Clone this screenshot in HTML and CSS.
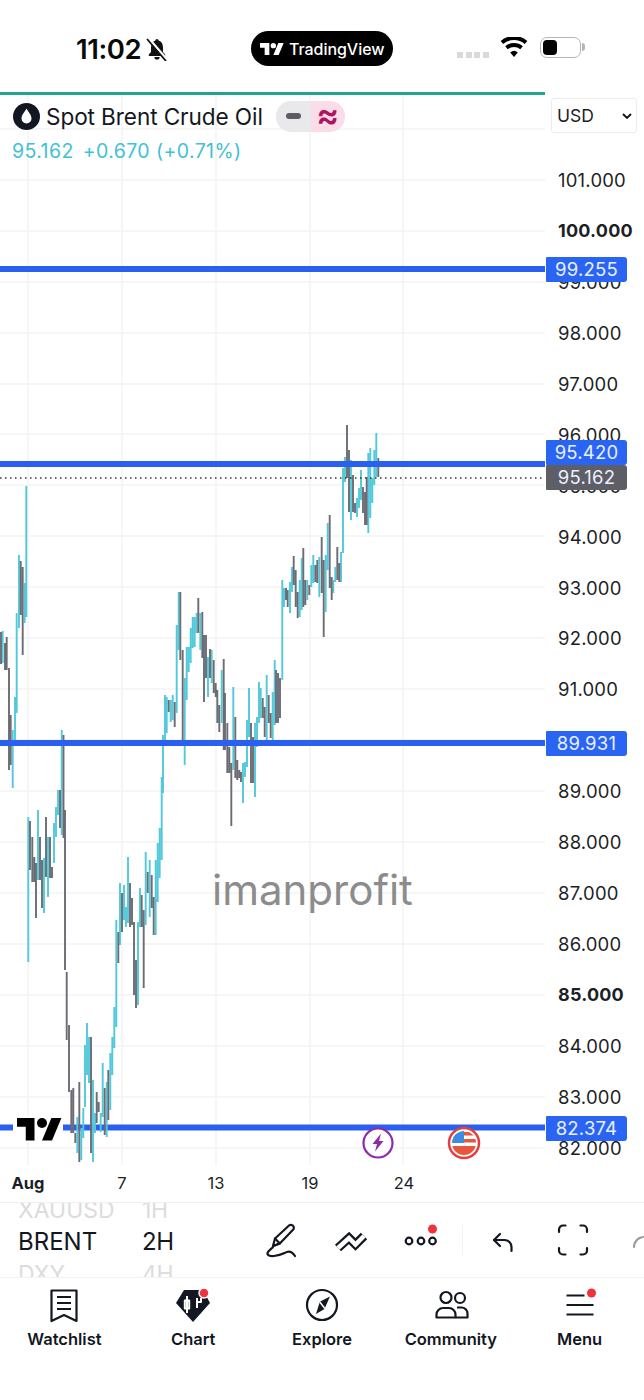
FILE: index.html
```html
<!DOCTYPE html>
<html lang="en">
<head>
<meta charset="utf-8">
<title>Spot Brent Crude Oil</title>
<link rel="stylesheet" href="styles.css">
</head>
<body>
<div class="page">
  <header class="status">
    <div class="status-left">
      <span class="clock">11:02</span>
      <svg class="bell" viewBox="0 0 24 24"><path d="M12 2a1.6 1.6 0 0 0-1.6 1.6C7.4 4.5 6 7.2 6 10.5V15l-2.2 2.6V19h16.4v-1.4L18 15v-4.500c0-3.300-1.400-6-4.400-6.900A1.600 1.600 0 0 0 12 2zM9.400 20a2.600 2.600 0 0 0 5.200 0z"/><path class="bell-cut" d="M3 1l19 22"/><path class="bell-slash" d="M2 2l19 22"/></svg>
    </div>
    <div class="pill">
      <svg class="pill-logo" viewBox="0 3 36 20"><path d="M14 22H7V11H0V4h14v18zM28 22h-8l7.500-18h8L28 22z"/><circle cx="20" cy="8" r="4"/></svg>
      <span>TradingView</span>
    </div>
    <div class="status-right">
      <div class="signal"><i></i><i></i><i></i><i></i></div>
      <svg class="wifi" viewBox="0 0 28 20"><path d="M14 20l-3.800-4.600a6 6 0 0 1 7.600 0z"/><path d="M7.700 12.300l-2.500-3a13.500 13.500 0 0 1 17.600 0l-2.500 3a9.700 9.700 0 0 0-12.600 0z"/><path d="M3.200 6.900L.7 3.900a20.500 20.500 0 0 1 26.600 0l-2.500 3a16.700 16.700 0 0 0-21.600 0z"/></svg>
      <div class="battery"><div class="battery-fill"></div></div>
      <div class="battery-cap"></div>
    </div>
  </header>

  <main class="chart">
    <div class="plot">
      <svg class="plot-svg" viewBox="0 92 545 1073">
        <path class="grid" d="M0 129H545M0 180H545M0 231H545M0 282H545M0 333H545M0 384H545M0 434H545M0 485H545M0 536H545M0 587H545M0 638H545M0 689H545M0 740H545M0 791H545M0 842H545M0 893H545M0 944H545M0 995H545M0 1046H545M0 1097H545M0 1148H545"/>
        <path class="grid" d="M28 95V1165M122 95V1165M216 95V1165M310 95V1165M403 95V1165"/>
        <path class="level" d="M0 1127.500H545"/>
        <path class="bars-teal" d="M2.700 631V663M12.700 730V788M15 697V743M16.700 613V713M19 555V628M24.700 583V623M26.300 486V617M28.300 817V962M38 810V880M44 858V913M48 837V897M54 823V863M56 807V837M58 790V815M61.700 730V835M77.300 1117V1153M81.300 1128V1160M83.300 1108V1138M85 1045V1107M87 1023V1075M89 1037V1083M93 1080V1162M95 1113V1133M100.700 1113V1132M102.700 1063V1117M106.700 1082V1137M110.300 1053V1110M112.300 1037V1075M114.300 1007V1048M116.300 920V1027M120 883V945M124 885V920M126 907V927M128 857V923M138 922V1005M140 888V927M145.700 852V925M149.700 860V917M155.700 860V935M157.700 843V902M159.700 828V878M161.700 777V860M163 735V793M165 695V743M166.700 697V733M170.700 700V722M172.700 695V720M176.700 625V713M178.700 592V650M184.700 678V765M186.700 647V700M188.700 647V672M190.700 628V663M192.700 617V648M194.700 617V647M196.700 613V633M200.300 613V650M208 657V697M211.700 650V683M221.700 670V723M233.300 687V770M243 763V803M245 762V777M247 720V767M249 688V737M255 723V797M257 717V747M259 682V723M260.700 688V718M266.700 675V745M272.700 692V740M274.700 660V725M282.300 580V680M284 588V607M290 582V613M292 567V592M299.700 580V617M301.700 558V610M307.300 580V600M311.300 565V587M313.300 555V583M319.300 557V597M325.700 555V612M327.700 523V570M333.300 580V593M335.300 567V582M341 552V582M343 468V553M345 457V482M351 460V520M357 498V517M359 488V508M361 470V500M368.300 453V533M370.300 448V518M372.300 478V503M374.300 450V485M376.300 433V477"/>
        <path class="bars-grey" d="M1 632V664M5 643V670M6.700 637V670M9 668V770M10.700 715V765M20.700 561V615M22.700 567V655M30 821V870M32.300 837V882M34.300 857V882M36 863V918M40 837V880M42 860V908M46 817V877M50 837V878M52 867V878M60 790V828M63.500 735V838M65 810V970M66.700 972V1040M69 1025V1092M71.300 1090V1133M73.300 1088V1133M75.300 1133V1143M79.300 1082V1162M91 1037V1153M96.700 1092V1123M98.700 1102V1112M104.700 1088V1135M108.300 1070V1120M118.300 932V963M122 893V932M130 883V927M132 898V925M134 922V995M136 960V1008M141.700 895V927M143.700 910V988M147.700 872V893M151.700 875V908M153.700 897V935M168.700 700V712M174.700 702V727M180.300 592V660M182.700 650V740M198.300 598V633M202.300 612V658M204 635V702M206 635V678M210 649V678M213.700 660V693M215.700 683V697M217.300 690V723M219.300 705V732M223.700 659V750M225 693V750M227.300 723V773M229.300 747V773M231.300 763V826M235.300 717V778M237.300 760V780M239.300 770V778M241 772V782M251 723V783M253 737V783M262.700 698V718M264.700 707V737M268.700 695V723M270.700 713V738M276 670V723M278 673V723M280 678V718M286 588V600M287.700 590V607M293.700 556V585M295.700 570V607M297.700 592V618M303.300 548V607M305.300 580V605M309.300 585V595M315.300 565V582M317.300 560V583M321.700 537V593M323.700 560V637M329.700 515V588M331.700 577V600M337.300 547V580M339.300 563V582M347 425V478M349 450V512M353 475V512M355 503V513M363 487V513M365 492V525M366.700 477V525M378.300 458V477"/>
        <path class="level" d="M0 269H545M0 464H545M0 743H545"/>
        <path class="last" d="M0 478H545"/>
        <rect class="logo-back" x="13" y="1116" width="50" height="26"/>
        <g transform="translate(17 1113) scale(1.25)"><path d="M14 22H7V11H0V4h14v18zM28 22h-8l7.500-18h8L28 22z"/><circle cx="20" cy="8" r="4"/></g>
        <circle class="bolt-ring" cx="378" cy="1143" r="14.500"/>
        <path class="bolt" d="M381 1133.500l-8.500 10.500h4.500l-2 7.500 8.500-10.500h-4.500z"/>
        <clipPath id="flag"><circle cx="464" cy="1143" r="12"/></clipPath>
        <circle class="flag-ring" cx="464" cy="1143" r="15"/>
        <g clip-path="url(#flag)">
          <path class="flag-red" d="M464 1132h12v3.500h-12zM464 1139h12v3.500h-12zM452 1146h24v9h-24z"/>
          <rect class="flag-blue" x="452" y="1131" width="12" height="12"/>
        </g>
      </svg>
      <div class="legend">
        <div class="legend-row">
          <svg class="drop" viewBox="0 0 27 27"><circle cx="13.500" cy="13.500" r="13.500"/><path class="drop-in" d="M13.500 5.500c-1 2.500-5 6-5 10a5 5 0 0 0 10 0c0-4-4-7.500-5-10z"/></svg>
          <span class="legend-title">Spot Brent Crude Oil</span>
          <div class="badges">
            <div class="badge-grey"><i></i></div>
            <div class="badge-pink">≈</div>
          </div>
        </div>
        <div class="legend-values"><span>95.162</span><span>+0.670 (+0.71%)</span></div>
      </div>
      <div class="watermark">imanprofit</div>
    </div>
    <aside class="axis">
      <span class="price">101.000</span>
      <span class="price strong">100.000</span>
      <span class="price">99.000</span>
      <span class="price">98.000</span>
      <span class="price">97.000</span>
      <span class="price">96.000</span>
      <span class="price">95.000</span>
      <span class="price">94.000</span>
      <span class="price">93.000</span>
      <span class="price">92.000</span>
      <span class="price">91.000</span>
      <span class="price">90.000</span>
      <span class="price">89.000</span>
      <span class="price">88.000</span>
      <span class="price">87.000</span>
      <span class="price">86.000</span>
      <span class="price strong">85.000</span>
      <span class="price">84.000</span>
      <span class="price">83.000</span>
      <span class="price">82.000</span>
      <div class="currency"><span>USD</span><svg class="caret" viewBox="0 0 10 6"><path d="M1 1l4 4 4-4"/></svg></div>
      <div class="tag tag-99">99.255</div>
      <div class="tag tag-95">95.420</div>
      <div class="tag tag-last">95.162</div>
      <div class="tag tag-89">89.931</div>
      <div class="tag tag-82">82.374</div>
    </aside>
  </main>

  <div class="timeline">
    <span class="time time-first">Aug</span>
    <span class="time">7</span>
    <span class="time">13</span>
    <span class="time">19</span>
    <span class="time">24</span>
  </div>

  <section class="toolbar">
    <div class="picker">
      <div class="wheel wheel-symbol">
        <span class="faded">XAUUSD</span>
        <span>BRENT</span>
        <span class="faded">DXY</span>
      </div>
      <div class="wheel wheel-frame">
        <span class="faded">1H</span>
        <span>2H</span>
        <span class="faded">4H</span>
      </div>
    </div>
    <div class="tool">
      <svg viewBox="0 0 36 36"><path d="M10 24l2-7.500L26 3.500a2.800 2.800 0 0 1 4 .3 2.800 2.800 0 0 1 0 4L16.800 21.500z"/><path d="M10 24l6.800-2.500M12 16.500l4.800 5"/><path d="M32 34c-2-3-5-5-8-4-3 1-5 3-13 4-4 .5-7-1-6.500-3 .5-2 3-3.500 5.500-6"/></svg>
    </div>
    <div class="tool">
      <svg viewBox="0 0 36 36"><path class="zig-o" d="M5 26l11-10 6.500 6.500L31 14"/><path class="zig-i" d="M5 26l11-10 6.500 6.500L31 14"/></svg>
    </div>
    <div class="tool">
      <svg viewBox="0 0 36 36"><circle cx="6" cy="19" r="3.300"/><circle cx="18" cy="19" r="3.300"/><circle cx="29.500" cy="19" r="3.300"/><circle class="dot-red" cx="29.500" cy="7" r="4.500"/></svg>
    </div>
    <div class="tool-divider"></div>
    <div class="tool">
      <svg viewBox="0 0 36 36"><path d="M15 12l-6 6 6 6"/><path d="M9 18h10.500a7 7 0 0 1 7 7v4"/></svg>
    </div>
    <div class="tool">
      <svg viewBox="0 0 36 36"><path d="M10.500 3.500H8A4 4 0 0 0 4 7.500V10M25.500 3.500H28a4 4 0 0 1 4 4V10M4 26v2.500a4 4 0 0 0 4 4h2.500M32 26v2.500a4 4 0 0 1-4 4h-2.500"/></svg>
    </div>
    <div class="tool tool-cut">
      <svg viewBox="0 0 36 36"><path d="M9 25a10 10 0 0 1 9-10"/></svg>
    </div>
  </section>

  <nav class="tabs">
    <div class="tab">
      <svg viewBox="0 0 36 36"><path d="M5.500 3.500h25V34L18 28 5.500 34z"/><path d="M11 10h14M11 16h14M11 22h14"/></svg>
      <span>Watchlist</span>
    </div>
    <div class="tab">
      <svg viewBox="0 0 36 36"><path class="gem" d="M9 3h19l7 13-17 19L1 16z"/><path class="gem-in" d="M12 9v17M9.800 13.500h4.400v8H9.800zM22 11v10M22 15h4v-4"/><circle class="dot-red ringed" cx="29" cy="6" r="5"/></svg>
      <span>Chart</span>
    </div>
    <div class="tab">
      <svg viewBox="0 0 36 36"><circle cx="18" cy="18" r="15"/><path class="needle" d="M26 9.500L20.500 22 12 27l3.800-12.300z"/><path class="needle-cut" d="M15.800 15l5 6.500"/></svg>
      <span>Explore</span>
    </div>
    <div class="tab">
      <svg viewBox="0 0 36 36"><circle cx="13" cy="10.500" r="5.500"/><circle cx="27" cy="11" r="5"/><path d="M3.500 30.500v-3a6.500 6.500 0 0 1 6.500-6.500h6a6.500 6.500 0 0 1 6.500 6.500v3z"/><path d="M24 20.500h4.500a6 6 0 0 1 6 6v4H22.500"/></svg>
      <span>Community</span>
    </div>
    <div class="tab">
      <svg viewBox="0 0 36 36"><path d="M4.500 8.500h18M4.500 18h27M4.500 27.500h27"/><circle class="dot-red" cx="29.500" cy="6" r="4.500"/></svg>
      <span>Menu</span>
    </div>
  </nav>
</div>
</body>
</html>
```
FILE: styles.css
```css
* { box-sizing: border-box; }
html, body { margin: 0; padding: 0; background: #fff; }
body { font-family: Inter, "Liberation Sans", sans-serif; color: #131722; }
.page { width: 644px; height: 1400px; overflow: hidden; display: flex; flex-direction: column; }

/* status bar */
.status { height: 92px; display: flex; align-items: flex-start; padding-top: 31px; flex: none; }
.status-left { width: 251px; padding-left: 76px; display: flex; align-items: center; height: 35px; }
.clock { font-size: 27.500px; font-weight: 600; letter-spacing: -0.4px; color: #0a0a0a; }
.bell { width: 24px; height: 24px; margin-left: 4px; fill: #111; }
.bell-cut { stroke: #fff; stroke-width: 3; }
.bell-slash { stroke: #111; stroke-width: 1.8; }
.pill { width: 142px; height: 35px; border-radius: 18px; background: #000; color: #fff; display: flex; align-items: center; padding-left: 9px; gap: 5px; font-size: 16px; font-weight: 500; letter-spacing: -0.05px; }
.pill-logo { width: 24px; height: 14px; fill: #fff; }
.status-right { flex: 1; display: flex; align-items: center; height: 35px; padding-left: 64px; }
.signal { display: flex; gap: 2.500px; margin-top: 12px; }
.signal i { width: 6px; height: 6px; background: #d9d9d9; }
.wifi { width: 28px; height: 20px; margin-left: 11px; margin-top: -3px; fill: #000; }
.battery { width: 41px; height: 21px; margin-left: 12px; margin-top: -3px; border: 1.500px solid #b5b5b5; border-radius: 7px; padding: 2px; background: #fff; }
.battery-fill { width: 14px; height: 100%; border-radius: 4px; background: #000; }
.battery-cap { width: 3px; height: 8px; margin-top: -3px; margin-left: 1px; border-radius: 0 3px 3px 0; background: #b5b5b5; }

/* chart */
.chart { height: 1073px; display: flex; flex: none; position: relative; }
.plot { width: 545px; position: relative; border-top: 3px solid #1fa692; flex: none; height: 1073px; }
.plot-svg { display: block; position: absolute; left: 0; top: -3px; width: 545px; height: 1073px; fill: #000; }
.grid { fill: none; stroke: #f3f3f5; stroke-width: 1.500; }
.level { fill: none; stroke: #2a5ff0; stroke-width: 6; }
.bars-teal { fill: none; stroke: #52c9da; stroke-width: 1.900; }
.bars-grey { fill: none; stroke: #6c6c76; stroke-width: 1.900; }
.last { fill: none; stroke: #333; stroke-width: 1.400; stroke-dasharray: 1.500 3.500; }
.logo-back { fill: #fff; }
.bolt-ring { fill: #fff; stroke: #8e2ba8; stroke-width: 2.200; }
.bolt { fill: #8e2ba8; }
.flag-ring { fill: #fff; stroke: #e2403f; stroke-width: 2.500; }
.flag-red { fill: #e8553f; }
.flag-blue { fill: #3f8be0; }

.legend { position: absolute; left: 13px; top: 5px; }
.legend-row { display: flex; align-items: center; height: 32px; }
.drop { width: 27px; height: 27px; fill: #131722; flex: none; }
.drop-in { fill: #fff; }
.legend-title { margin-left: 6px; font-size: 22.600px; letter-spacing: -0.1px; color: #131722; white-space: nowrap; }
.badges { display: flex; margin-left: 13px; height: 31px; border-radius: 15px; overflow: hidden; }
.badge-grey { width: 35px; background: #e9e9eb; display: flex; align-items: center; justify-content: center; }
.badge-grey i { width: 15px; height: 6px; border-radius: 3px; background: #5d5d66; }
.badge-pink { width: 34px; background: #fadde9; color: #b0125f; font-size: 34px; font-weight: 600; line-height: 28px; text-align: center; }
.legend-values { display: flex; gap: 9px; margin-left: -1px; margin-top: 7px; font-size: 19.500px; letter-spacing: 0.4px; color: #3fc2d2; white-space: nowrap; }
.watermark { position: absolute; left: 212px; top: 769px; font-size: 42px; line-height: 52px; color: #8c8c8c; white-space: nowrap; }

/* axis */
.axis { flex: 1; position: relative; display: flex; flex-direction: column; justify-content: space-between; padding: 77px 0 6px 13px; }
.price { display: block; height: 22px; line-height: 22px; font-size: 18.500px; letter-spacing: 0.2px; color: #1d1f26; white-space: nowrap; }
.price.strong { font-weight: 700; font-size: 18px; }
.currency { position: absolute; left: 6px; top: 6px; width: 86px; height: 35px; background: #fff; border: 1px solid #ececec; border-radius: 3px; display: flex; align-items: center; justify-content: space-between; padding: 0 4px 0 5px; font-size: 17.500px; color: #1d1f26; }
.caret { width: 10px; height: 6px; fill: none; stroke: #111; stroke-width: 1.800; }
.tag { position: absolute; left: 1px; width: 81px; height: 25px; line-height: 25px; text-align: center; font-size: 18.500px; letter-spacing: 0.2px; color: #e9f0ff; background: #2a64f2; border-radius: 1px 3px 3px 1px; }
.tag-99 { top: 165px; }
.tag-95 { top: 348px; }
.tag-last { top: 373px; background: #5e5e66; }
.tag-89 { top: 639px; }
.tag-82 { top: 1024px; }

/* time axis */
.timeline { height: 38px; padding-bottom: 2px; display: flex; align-items: center; flex: none; border-bottom: 1px solid #f0f0f0; }
.time { width: 94px; text-align: center; font-size: 16.500px; color: #1d1f26; }
.time-first { width: 56px; margin-right: 19px; font-weight: 700; }

/* toolbar */
.toolbar { height: 75px; display: flex; align-items: center; flex: none; overflow: hidden; border-bottom: 1px solid #f2f2f2; }
.picker { width: 246px; height: 75px; padding-left: 18px; display: flex; flex: none; overflow: hidden; }
.wheel { display: flex; flex-direction: column; justify-content: center; height: 75px; padding-top: 3px; font-size: 24px; line-height: 32px; color: #131722; white-space: nowrap; overflow: hidden; }
.wheel-symbol { width: 96px; margin-right: 28px; }
.wheel-frame { width: 40px; letter-spacing: -0.3px; }
.wheel span { display: block; height: 32px; flex: none; }
.wheel .faded { color: #dcdcdc; font-size: 23px; }
.tool { width: 70px; height: 36px; flex: none; display: flex; justify-content: center; }
.tool svg { width: 36px; height: 36px; fill: none; stroke: #131722; stroke-width: 2.200; stroke-linecap: round; stroke-linejoin: round; }
.tool-divider { width: 1px; height: 30px; margin: 0 5px 0 6px; background: #f2f2f2; flex: none; }
.tool-cut svg { stroke: #9a9a9a; }
.zig-o { stroke-width: 9; stroke-linecap: butt; stroke-linejoin: miter; }
.zig-i { stroke: #fff; stroke-width: 4.500; stroke-linecap: butt; stroke-linejoin: miter; }
.dot-red { fill: #f0323c; stroke: none; }

/* tabs */
.tabs { display: flex; padding-top: 9px; flex: none; }
.tab { flex: 1; display: flex; flex-direction: column; align-items: center; gap: 6px; font-size: 16.500px; font-weight: 600; color: #131722; }
.tab svg { width: 36px; height: 36px; fill: none; stroke: #131722; stroke-width: 2.200; stroke-linejoin: round; }
.gem { fill: #131722; stroke: none; }
.gem-in { stroke: #fff; stroke-width: 2; }
.tab .dot-red { stroke: none; }
.tab .ringed { stroke: #fff; stroke-width: 1.500; }
.needle { fill: #131722; stroke: none; }
.needle-cut { stroke: #fff; stroke-width: 1.500; }
```
